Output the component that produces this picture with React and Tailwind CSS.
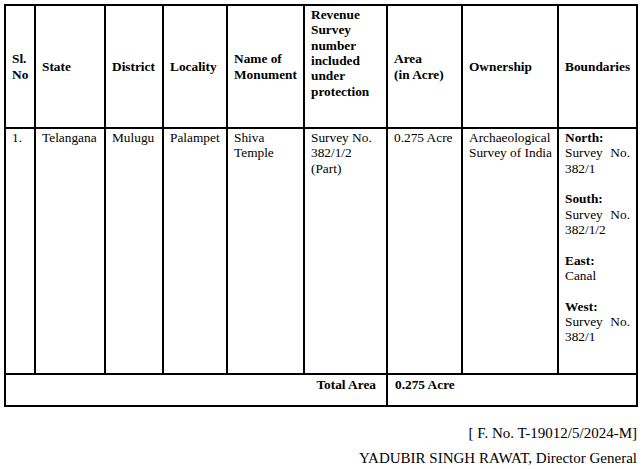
import React from "react";

const cols = "grid-cols-[30px_70px_58px_64px_77px_83px_75px_96px_79px]";

function H({ children, top = false }) {
  return (
    <div
      className={`border-r-2 border-b-2 border-black px-[6px] font-bold flex ${
        top ? "items-start pt-[1px]" : "items-center"
      }`}
    >
      <div>{children}</div>
    </div>
  );
}

function C({ children, className = "" }) {
  return (
    <div className={`border-r-2 border-b-2 border-black pl-[6px] pt-[1px] ${className}`}>
      {children}
    </div>
  );
}

export default function App() {
  return (
    <div className="w-[642px] h-[469px] bg-white text-black font-['Liberation_Serif',serif] text-[13.33px] leading-[15.33px] overflow-hidden">
      <div className="pt-[4px] pl-[4px]">
        <div className={`grid ${cols} border-l-2 border-t-2 border-black w-[634px]`}>
          {/* header */}
          <div className="h-[123px] border-r-2 border-b-2 border-black px-[6px] font-bold flex items-center">
            <div>
              Sl.
              <br />
              No
            </div>
          </div>
          <H>State</H>
          <H>District</H>
          <H>Locality</H>
          <H>
            Name of
            <br />
            Monument
          </H>
          <H top>
            Revenue
            <br />
            Survey
            <br />
            number
            <br />
            included
            <br />
            under
            <br />
            protection
          </H>
          <H>
            Area
            <br />
            (in Acre)
          </H>
          <H>Ownership</H>
          <H>Boundaries</H>

          {/* body */}
          <C className="h-[246px] pr-[6px]">1.</C>
          <C className="pr-[6px]">Telangana</C>
          <C className="pr-[6px]">Mulugu</C>
          <C className="pr-[6px]">Palampet</C>
          <C className="pr-[6px]">
            Shiva
            <br />
            Temple
          </C>
          <C className="pr-[6px]">
            Survey No.
            <br />
            382/1/2
            <br />
            (Part)
          </C>
          <C className="pr-[6px]">0.275 Acre</C>
          <C className="pr-0">
            Archaeological
            <br />
            Survey of India
          </C>
          <C className="pr-[6px]">
            <p className="font-bold">North:</p>
            <p className="text-justify mb-[15.33px]">Survey No. 382/1</p>
            <p className="font-bold">South:</p>
            <p className="text-justify mb-[15.33px]">Survey No. 382/1/2</p>
            <p className="font-bold">East:</p>
            <p className="text-justify mb-[15.33px]">Canal</p>
            <p className="font-bold">West:</p>
            <p className="text-justify">Survey No. 382/1</p>
          </C>

          {/* total */}
          <div className="col-span-6 h-[32px] border-r-2 border-b-2 border-black pr-[10px] pt-[2px] text-right font-bold">
            Total Area
          </div>
          <div className="col-span-3 border-r-2 border-b-2 border-black px-[7px] pt-[2px] font-bold">
            0.275 Acre
          </div>
        </div>
      </div>

      <div className="pr-[5px] mt-[18px] text-right text-[15px] leading-[17px]">
        <p>[ F. No. T-19012/5/2024-M]</p>
        <p className="mt-[8px]">YADUBIR SINGH RAWAT, Director General</p>
      </div>
    </div>
  );
}
